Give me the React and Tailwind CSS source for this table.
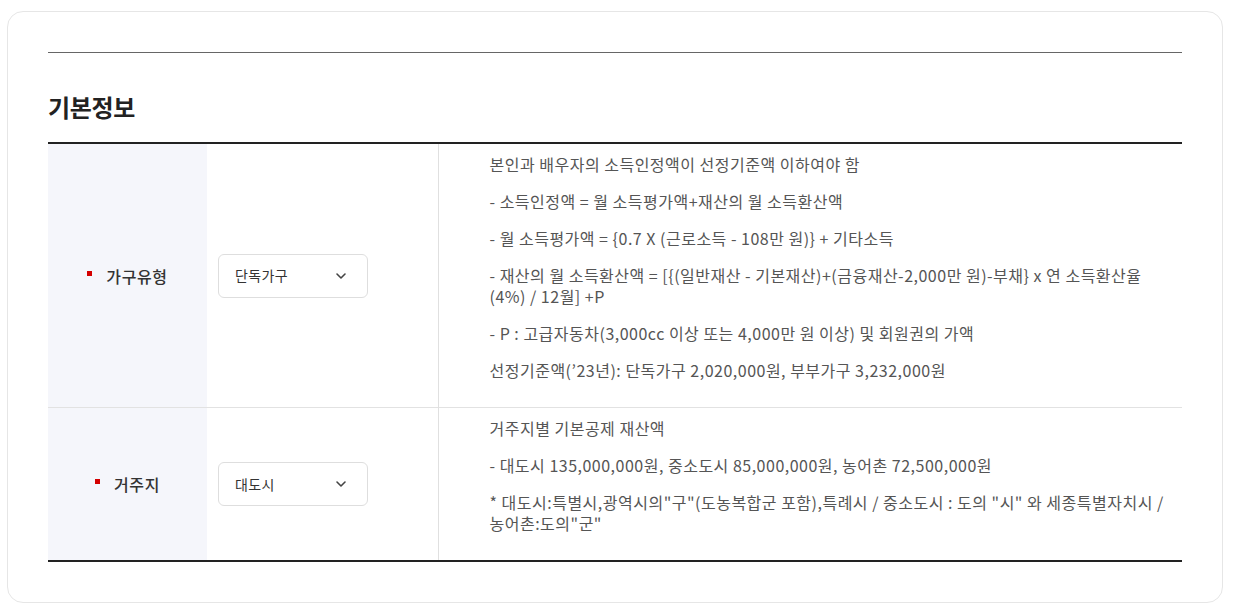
import { ChevronDown } from 'lucide-react';

const rows = [
  {
    label: '가구유형',
    value: '단독가구',
    lines: [
      '본인과 배우자의 소득인정액이 선정기준액 이하여야 함',
      '- 소득인정액 = 월 소득평가액+재산의 월 소득환산액',
      '- 월 소득평가액 = {0.7 X (근로소득 - 108만 원)} + 기타소득',
      '- 재산의 월 소득환산액 = [{(일반재산 - 기본재산)+(금융재산-2,000만 원)-부채} x 연 소득환산율 (4%) / 12월] +P',
      '- P : 고급자동차(3,000cc 이상 또는 4,000만 원 이상) 및 회원권의 가액',
      '선정기준액(’23년): 단독가구 2,020,000원, 부부가구 3,232,000원',
    ],
  },
  {
    label: '거주지',
    value: '대도시',
    lines: [
      '거주지별 기본공제 재산액',
      '- 대도시 135,000,000원, 중소도시 85,000,000원, 농어촌 72,500,000원',
      '* 대도시:특별시,광역시의"구"(도농복합군 포함),특례시 / 중소도시 : 도의 "시" 와 세종특별자치시 / 농어촌:도의"군"',
    ],
  },
];

export default function App() {
  return (
    <div className="min-h-screen bg-white pt-[11px] pl-[7px] pr-[14px] font-['Noto_Sans_CJK_KR',sans-serif]">
      <div className="h-[592px] rounded-2xl border border-[#e6e6e6] px-10 pt-10">
        <div className="border-t border-[#666]" />
        <h2 className="mt-[38px] text-[24px] font-bold leading-[32px] text-[#222] tracking-[-0.3px]">기본정보</h2>
        <table className="mt-[19px] w-full border-collapse border-t-2 border-b-2 border-[#222]">
          <tbody>
            {rows.map((r, i) => (
              <tr key={r.label} className={i > 0 ? 'border-t border-[#e2e2e2]' : ''}>
                <th className="w-[159px] bg-[#f5f6fb] align-middle">
                  <div className="flex items-start justify-center gap-[14px] text-[16px] font-medium leading-[22px] tracking-[0.6px] text-[#333]">
                    <span className="mt-[6px] h-[5px] w-[5px] bg-[#d40000]" />
                    <span>{r.label}</span>
                  </div>
                </th>
                <td className="w-[231px] border-r border-[#e0e0e0] px-[11px] align-middle">
                  <div className="flex h-11 w-[150px] items-center justify-between rounded-md border border-[#dedede] pl-4 pr-[18px] text-[14px] tracking-[0.4px] text-[#333]">
                    <span>{r.value}</span>
                    <ChevronDown size={16} strokeWidth={2.4} className="text-[#444]" />
                  </div>
                </td>
                <td className="pl-[51px] pr-1 pt-[10px] pb-[10px] text-[16px] leading-[21px] text-[#555] tracking-[0.5px] break-keep">
                  {r.lines.map((l, j) => (
                    <p key={j} className="mb-4">{l}</p>
                  ))}
                </td>
              </tr>
            ))}
          </tbody>
        </table>
      </div>
    </div>
  );
}
